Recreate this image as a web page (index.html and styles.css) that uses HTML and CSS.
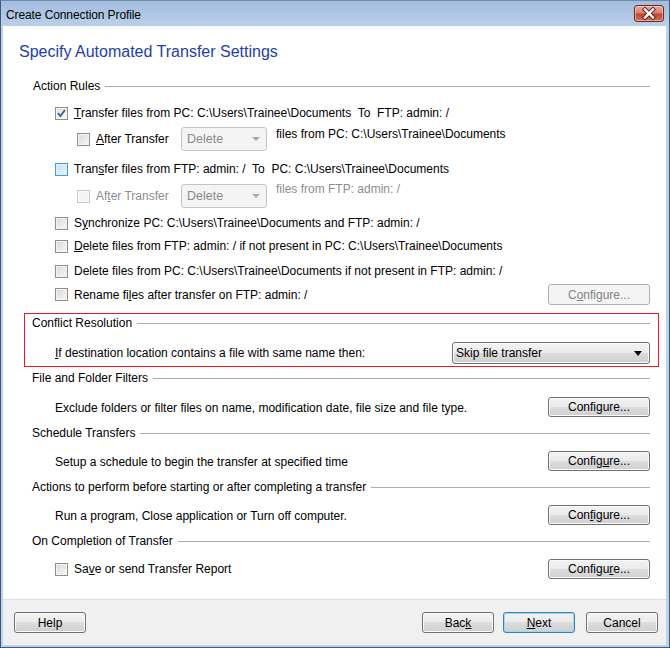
FILE: index.html
```html
<!DOCTYPE html>
<html>
<head>
<meta charset="utf-8">
<link rel="stylesheet" href="styles.css">
</head>
<body>
<div class="window">
  <div class="titlebar">
    <span class="title">Create Connection Profile</span>
    <span class="close">
      <svg width="30" height="17" viewBox="0 0 30 17">
        <path d="M11 4.5 L19 12.5 M19 4.5 L11 12.5" stroke="#5b2a22" stroke-width="4.4" stroke-linecap="square" fill="none"/>
        <path d="M11 4.5 L19 12.5 M19 4.5 L11 12.5" stroke="#ffffff" stroke-width="2.4" stroke-linecap="square" fill="none"/>
      </svg>
    </span>
  </div>
  <div class="content">
    <div class="heading">Specify Automated Transfer Settings</div>

    <div class="ghdr first"><span class="gtext">Action Rules</span><span class="gline"></span></div>

    <div class="row r1">
      <span class="cb checked"><svg width="11" height="11" viewBox="0 0 11 11"><path d="M2 5.2 L4.4 8 L9 2" stroke="#4a5d93" stroke-width="1.9" fill="none"/></svg></span>
      <span class="lbl"><u>T</u>ransfer files from PC: C:\Users\Trainee\Documents&nbsp; To&nbsp; FTP: admin: /</span>
    </div>
    <div class="row r2 sub">
      <span class="cb"></span>
      <span class="lbl after"><u>A</u>fter Transfer</span>
      <span class="dd disabled"><span class="ddtext">Delete</span><span class="ddarrow"></span></span>
      <span class="lbl filestext">files from PC: C:\Users\Trainee\Documents</span>
    </div>
    <div class="row r3">
      <span class="cb hot"></span>
      <span class="lbl">Tran<u>s</u>fer files from FTP: admin: /&nbsp; To&nbsp; PC: C:\Users\Trainee\Documents</span>
    </div>
    <div class="row r4 sub">
      <span class="cb dis"></span>
      <span class="lbl after gray">Af<u>t</u>er Transfer</span>
      <span class="dd disabled"><span class="ddtext">Delete</span><span class="ddarrow"></span></span>
      <span class="lbl filestext gray">files from FTP: admin: /</span>
    </div>
    <div class="row r5">
      <span class="cb"></span>
      <span class="lbl">S<u>y</u>nchronize PC: C:\Users\Trainee\Documents and FTP: admin: /</span>
    </div>
    <div class="row r6">
      <span class="cb"></span>
      <span class="lbl"><u>D</u>elete files from FTP: admin: / if not present in PC: C:\Users\Trainee\Documents</span>
    </div>
    <div class="row r7">
      <span class="cb"></span>
      <span class="lbl">Delete files from PC: C:\Users\Trainee\Documents if not present in FTP: admin: /</span>
    </div>
    <div class="row r8">
      <span class="cb"></span>
      <span class="lbl">Rename fi<u>l</u>es after transfer on FTP: admin: /</span>
      <span class="spacer"></span>
      <span class="btn cfg btn-dis">C<u>o</u>nfigure...</span>
    </div>

    <div class="redbox">
      <div class="ghdr inbox"><span class="gtext">Conflict Resolution</span><span class="gline"></span></div>
      <div class="row conflict">
        <span class="lbl"><u>I</u>f destination location contains a file with same name then:</span>
        <span class="spacer"></span>
        <span class="dd enabled"><span class="ddtext">Skip file transfer</span><span class="ddarrow black"></span></span>
      </div>
    </div>

    <div class="ghdr g2"><span class="gtext">File and Folder Filters</span><span class="gline"></span></div>
    <div class="row brow">
      <span class="lbl desc">Exclude folders or filter files on name, modification date, file size and file type.</span>
      <span class="spacer"></span>
      <span class="btn cfg">Confi<u>g</u>ure...</span>
    </div>

    <div class="ghdr g3"><span class="gtext">Schedule Transfers</span><span class="gline"></span></div>
    <div class="row brow">
      <span class="lbl desc">Setup a schedule to begin the transfer at specified time</span>
      <span class="spacer"></span>
      <span class="btn cfg">Config<u>u</u>re...</span>
    </div>

    <div class="ghdr g3"><span class="gtext">Actions to perform before starting or after completing a transfer</span><span class="gline"></span></div>
    <div class="row brow">
      <span class="lbl desc">Run a program, Close application or Turn off computer.</span>
      <span class="spacer"></span>
      <span class="btn cfg">Con<u>f</u>igure...</span>
    </div>

    <div class="ghdr g3"><span class="gtext">On Completion of Transfer</span><span class="gline"></span></div>
    <div class="row brow">
      <span class="cb"></span>
      <span class="lbl">Sa<u>v</u>e or send Transfer Report</span>
      <span class="spacer"></span>
      <span class="btn cfg">Configu<u>r</u>e...</span>
    </div>
  </div>
  <div class="footer">
    <span class="btn fbtn">Help</span>
    <span class="spacer"></span>
    <span class="btn fbtn">Bac<u>k</u></span>
    <span class="btn fbtn next"><u>N</u>ext</span>
    <span class="btn fbtn cancel">Cancel</span>
  </div>
</div>
</body>
</html>
```
FILE: styles.css
```css
* { box-sizing: border-box; }
html, body { margin: 0; padding: 0; }
body {
  width: 670px;
  height: 648px;
  font-family: "Liberation Sans", Arial, sans-serif;
  font-size: 12px;
  color: #000;
  background: #fff;
}
u { text-decoration: underline; text-underline-offset: 1px; }

.window {
  width: 670px;
  height: 648px;
  background: #bcd3ec;
  border: 1px solid #3f5a78;
  border-top-color: #6f8aa8;
  padding: 0 3px 2px 2px;
  display: flex;
  flex-direction: column;
}

.titlebar {
  height: 25px;
  flex: none;
  display: flex;
  align-items: center;
  background: linear-gradient(#a2bcdc, #bad0ea);
  margin: 0 -3px 0 -2px;
  padding: 2px 5px 0 5px;
}
.title {
  font-family: "Liberation Sans", Arial, sans-serif;
  font-size: 12px;
  color: #000;
  letter-spacing: -0.1px;
}
.close {
  margin-left: auto;
  width: 30px;
  height: 17px;
  margin-top: -3px;
  border: 1px solid #6e2a20;
  border-radius: 3px;
  background: linear-gradient(#e8a99c 0%, #d7826f 45%, #c2452d 55%, #d0705a 100%);
  box-shadow: inset 0 0 0 1px rgba(255,220,210,0.55);
  display: flex;
  align-items: center;
  justify-content: center;
  overflow: hidden;
}
.close svg { display: block; margin: -1px; }

.content {
  flex: 1;
  background: #fff;
  display: flex;
  flex-direction: column;
  padding-top: 15px;
}

.heading {
  height: 22px;
  line-height: 22px;
  padding-left: 16px;
  font-size: 16px;
  color: #1e3ea8;
}

.ghdr {
  display: flex;
  align-items: center;
  height: 14px;
  padding-left: 29px;
  padding-right: 16px;
  margin-top: 9px;
}
.ghdr.first { margin-top: 16px; padding-left: 30px; }
.ghdr.g2 { margin-top: 4px; }
.gtext { white-space: nowrap; line-height: 14px; }
.gline {
  flex: 1;
  height: 1px;
  background: #ababab;
  margin-left: 5px;
  margin-top: 1px;
}

.row {
  display: flex;
  align-items: center;
  height: 14px;
  padding-left: 52px;
  padding-right: 16px;
  white-space: nowrap;
}
.row.sub { padding-left: 74px; height: 24px; }
.r1 { margin-top: 13px; }
.r2 { margin-top: 7px; }
.r3 { margin-top: 11px; }
.r4 { margin-top: 8px; }
.r5 { margin-top: 8px; }
.r6 { margin-top: 9px; }
.r7 { margin-top: 11px; }
.r8 { margin-top: 6px; height: 21px; }

.lbl { line-height: 14px; }
.gray { color: #8d8d8d; }
.after { margin-left: 0; width: 85px; }
.filestext { align-self: flex-start; margin-left: 9px; margin-top: 0; }
.r4 .filestext { margin-top: -2px; }
.spacer { flex: 1; }

.cb {
  width: 13px;
  height: 13px;
  flex: none;
  border: 1px solid #8f8f8f;
  background: linear-gradient(135deg, #d9d9d9, #f7f7f7);
  box-shadow: inset 0 0 0 1px #f4f4f4;
  margin-right: 6px;
  display: flex;
  align-items: center;
  justify-content: center;
}
.cb svg { display: block; }
.cb.checked { background: linear-gradient(135deg, #e0e0e0, #fafafa); }
.cb.hot {
  border-color: #4a9bd2;
  background: linear-gradient(135deg, #bfe3f8, #e6f5fd);
  box-shadow: inset 0 0 0 1px #def1fc;
}
.cb.dis {
  border-color: #c8c8c8;
  background: #f4f4f4;
  box-shadow: inset 0 0 0 1px #fafafa;
}

.dd {
  display: flex;
  align-items: center;
  position: relative;
  border-radius: 3px;
  flex: none;
}
.dd.disabled {
  width: 86px;
  height: 24px;
  border: 1px solid #c4c4c4;
  background: #f4f4f4;
  color: #8a8a8a;
  padding-left: 5px;
  font-size: 12.5px;
}
.dd.enabled {
  width: 198px;
  height: 22px;
  border: 1px solid #707070;
  background: linear-gradient(#f3f3f3 0%, #ebebeb 50%, #dddddd 50%, #cfcfcf 100%);
  box-shadow: inset 0 0 0 1px #fcfcfc;
  padding-left: 3px;
}
.ddtext { line-height: 14px; }
.ddarrow {
  margin-left: auto;
  margin-right: 6px;
  width: 0;
  height: 0;
  border-left: 4px solid transparent;
  border-right: 4px solid transparent;
  border-top: 4px solid #a8a8a8;
}
.ddarrow.black { border-top-color: #000; margin-right: 7px; border-left-width: 4px; border-right-width: 4px; border-top-width: 5px; }

.btn {
  display: flex;
  align-items: center;
  justify-content: center;
  flex: none;
  border: 1px solid #707070;
  border-radius: 3px;
  background: linear-gradient(#f2f2f2 0%, #ebebeb 50%, #dddddd 50%, #cfcfcf 100%);
  box-shadow: inset 0 0 0 1px #fbfbfb;
  line-height: 14px;
}
.cfg { width: 102px; height: 20px; }
.r8 .cfg { height: 21px; }
.btn-dis {
  border-color: #adb2b5;
  background: #f4f4f4;
  box-shadow: none;
  color: #838383;
}

.redbox {
  margin: 8px 7px 0 21px;
  border: 1px solid #e8181b;
  padding: 2px 8px 2px 7px;
  display: flex;
  flex-direction: column;
}
.ghdr.inbox { margin-top: 0; padding-left: 0; padding-right: 0; }
.row.conflict {
  padding-left: 23px;
  padding-right: 0;
  margin-top: 12px;
  height: 22px;
}

.brow { height: 20px; margin-top: 11px; }
.brow .desc { margin-top: 2px; margin-left: 0; }
.ghdr.g2 + .brow { margin-top: 12px; }

.footer {
  height: 46px;
  flex: none;
  background: #f0f0f0;
  border-top: 1px solid #dfdfdf;
  display: flex;
  align-items: flex-start;
  padding: 12px 8px 0 11px;
}
.fbtn { width: 72px; height: 21px; }
.fbtn + .fbtn { margin-left: 9px; }
.fbtn.cancel { margin-left: 11px; }
.next {
  border-color: #3c7fb1;
  box-shadow: inset 0 0 0 1px #9bdaf7;
}
```
